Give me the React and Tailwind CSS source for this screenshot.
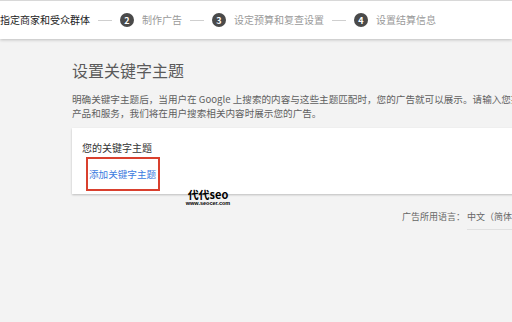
export default function App() {
  const font = { fontFamily: '"Noto Sans CJK SC", "Liberation Sans", sans-serif' };
  const Step = ({ n }) => (
    <span className="flex h-[14px] w-[14px] shrink-0 items-center justify-center rounded-full bg-[#4a4a4a] text-[9px] font-bold leading-none text-white">{n}</span>
  );
  const Line = () => <span className="h-px w-[14px] shrink-0 bg-[#cfcfcf]" />;
  return (
    <div className="h-[322px] w-[512px] overflow-hidden bg-[#f3f3f3]" style={font}>
      <div className="relative z-10 flex h-[39px] items-center gap-[8px] whitespace-nowrap border-t border-[#d8d8d8] bg-white text-[10px] leading-[14px] text-[#9a9a9a] shadow-[0_1px_3px_rgba(0,0,0,0.22)]">
        <span className="text-[#222]">指定商家和受众群体</span>
        <Line />
        <Step n="2" />
        <span>制作广告</span>
        <Line />
        <Step n="3" />
        <span>设定预算和复查设置</span>
        <Line />
        <Step n="4" />
        <span>设置结算信息</span>
      </div>
      <div className="w-[470px] pl-[72px] pt-[20px]">
        <div className="text-[16px] leading-[22px] text-[#5a5a5a]">设置关键字主题</div>
        <div className="mt-[11px] whitespace-nowrap text-[9.6px] leading-[14px] text-[#5f5f5f]">
          <div>明确关键字主题后，当用户在 Google 上搜索的内容与这些主题匹配时，您的广告就可以展示。请输入您提供的</div>
          <div>产品和服务，我们将在用户搜索相关内容时展示您的广告。</div>
        </div>
        <div className="relative mt-[8px] h-[66px] w-[460px] bg-white pl-[10px] pt-[13px] shadow-[0_1px_2px_rgba(0,0,0,0.22)]">
          <div className="text-[10px] leading-[14px] text-[#333]">您的关键字主题</div>
          <div className="ml-[4px] mt-[2px] flex h-[34px] w-[74px] items-center whitespace-nowrap border-2 border-[#d9402e] pl-[1px] text-[9.6px] leading-[14px] text-[#3b7be0]">添加关键字主题</div>
          <div className="absolute left-[111px] top-[61px] flex w-[50px] flex-col items-center leading-none">
            <span className="text-[11px] font-bold leading-[11px] text-black">代代seo</span>
            <span className="text-[5.5px] font-bold leading-[7px] text-black" style={{ fontFamily: '"Liberation Sans", sans-serif' }}>www.seocer.com</span>
          </div>
        </div>
        <div className="ml-[330px] mt-[16px] flex whitespace-nowrap text-[9px] leading-[14px] text-[#666]">
          <span>广告所用语言：</span>
          <span className="ml-[2px] border-b border-[#e0e0e0] pb-[5px]">中文（简体）</span>
        </div>
      </div>
    </div>
  );
}
